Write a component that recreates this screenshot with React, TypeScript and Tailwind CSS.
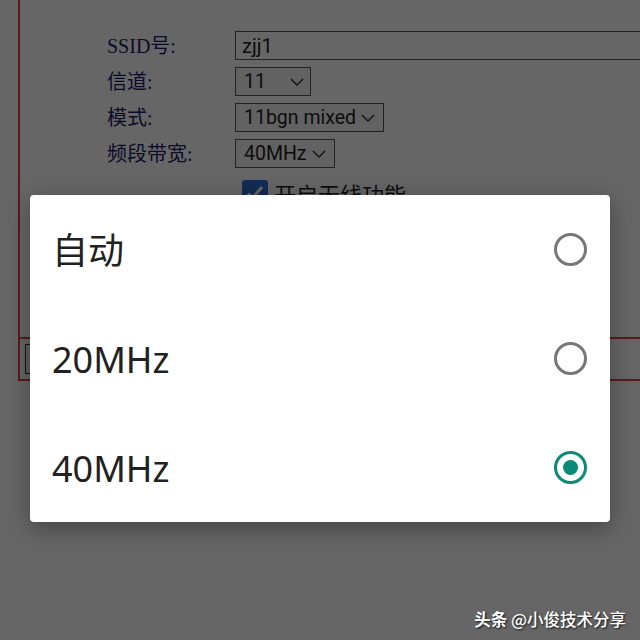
import React from "react";

const Chevron = () => (
  <svg width="14" height="8" viewBox="0 0 14 8" fill="none" className="shrink-0">
    <path d="M1 1l6 6 6-6" stroke="#2a2a2a" strokeWidth="1.4" />
  </svg>
);

const Select = ({ text, w, gap }: { text: string; w: string; gap: string }) => (
  <div
    className={`${w} h-[29px] flex items-center pl-[8px] pr-[6px] border border-[#555] bg-[#f6f6f6] text-[19.5px] text-[#222] whitespace-nowrap ${gap}`}
    style={{ fontFamily: "Roboto, 'Noto Sans', sans-serif" }}
  >
    <span className="leading-none whitespace-nowrap">{text}</span>
    <Chevron />
  </div>
);

const Label = ({ children }: { children: React.ReactNode }) => (
  <div
    className="w-[128px] text-[20px] leading-none text-[#1c1c68] whitespace-nowrap"
    style={{ fontFamily: "'Liberation Serif', 'Noto Sans CJK SC', serif" }}
  >
    {children}
  </div>
);

const Radio = ({ checked }: { checked?: boolean }) =>
  checked ? (
    <div className="w-[33px] h-[33px] rounded-full border-[3px] border-[#0b8a7a] flex items-center justify-center">
      <div className="w-[15px] h-[15px] rounded-full bg-[#0b8a7a]" />
    </div>
  ) : (
    <div className="w-[33px] h-[33px] rounded-full border-[3px] border-[#777]" />
  );

export default function App() {
  const options = [
    { label: "自动", checked: false },
    { label: "20MHz", checked: false },
    { label: "40MHz", checked: true },
  ];
  return (
    <div className="relative w-[640px] h-[640px] overflow-hidden bg-white">
      {/* underlying page */}
      <div className="ml-[18px] border-l-2 border-[#e04545] flex flex-col">
        <div className="h-[337px] pt-[31px] pl-[87px] flex flex-col gap-[7px]">
          <div className="flex items-center h-[29px]">
            <Label>SSID号:</Label>
            <div
              className="flex-1 h-[29px] border border-[#555] bg-white pl-[6px] flex items-center text-[20px] text-[#222] -mr-[40px]"
              style={{ fontFamily: "Roboto, 'Noto Sans', sans-serif" }}
            >
              zjj1
            </div>
          </div>
          <div className="flex items-center h-[29px]">
            <Label>信道:</Label>
            <Select text="11" w="w-[76px]" gap="justify-between" />
          </div>
          <div className="flex items-center h-[29px]">
            <Label>模式:</Label>
            <Select text="11bgn mixed" w="w-[149px]" gap="gap-[5px]" />
          </div>
          <div className="flex items-center h-[29px]">
            <Label>频段带宽:</Label>
            <Select text="40MHz" w="w-[100px]" gap="gap-[5px]" />
          </div>
          <div className="flex items-center h-[26px] pl-[135px] gap-[6px] mt-[5px]">
            <div className="w-[26px] h-[26px] rounded-[3px] bg-[#2f6fd0] flex items-center justify-center">
              <svg width="20" height="20" viewBox="0 0 20 20" fill="none">
                <path d="M3 10.5l4.5 4.5L17 4" stroke="#fff" strokeWidth="3" />
              </svg>
            </div>
            <span
              className="text-[22px] text-[#222] leading-none whitespace-nowrap"
              style={{ fontFamily: "'Noto Sans CJK SC', sans-serif" }}
            >
              开启无线功能
            </span>
          </div>
        </div>
        <div className="h-[44px] border-y-2 border-[#e04545] flex items-center pl-[5px]">
          <div className="w-[30px] h-[30px] border border-[#333] bg-[#eee]" />
        </div>
      </div>

      {/* dim overlay */}
      <div className="absolute inset-0 bg-black/60" />

      {/* dialog */}
      <div
        className="absolute left-[30px] top-[195px] w-[580px] bg-white rounded-[4px] shadow-[0_6px_24px_rgba(0,0,0,0.35)] flex flex-col"
        style={{ fontFamily: "'Noto Sans', 'Noto Sans CJK SC', sans-serif" }}
      >
        {options.map((o) => (
          <div key={o.label} className="h-[109px] flex items-center justify-between pl-[22px] pr-[23px]">
            <span className="text-[36px] leading-none text-[#212121] pt-[2px]">{o.label}</span>
            <Radio checked={o.checked} />
          </div>
        ))}
      </div>

      {/* watermark */}
      <div
        className="absolute right-[14px] bottom-[13px] text-white text-[16.5px] leading-none font-medium whitespace-nowrap [text-shadow:1px_1px_2px_rgba(0,0,0,0.8)]"
        style={{ fontFamily: "'Noto Sans CJK SC', sans-serif" }}
      >
        <span className="font-bold">头条</span> @小俊技术分享
      </div>
    </div>
  );
}
